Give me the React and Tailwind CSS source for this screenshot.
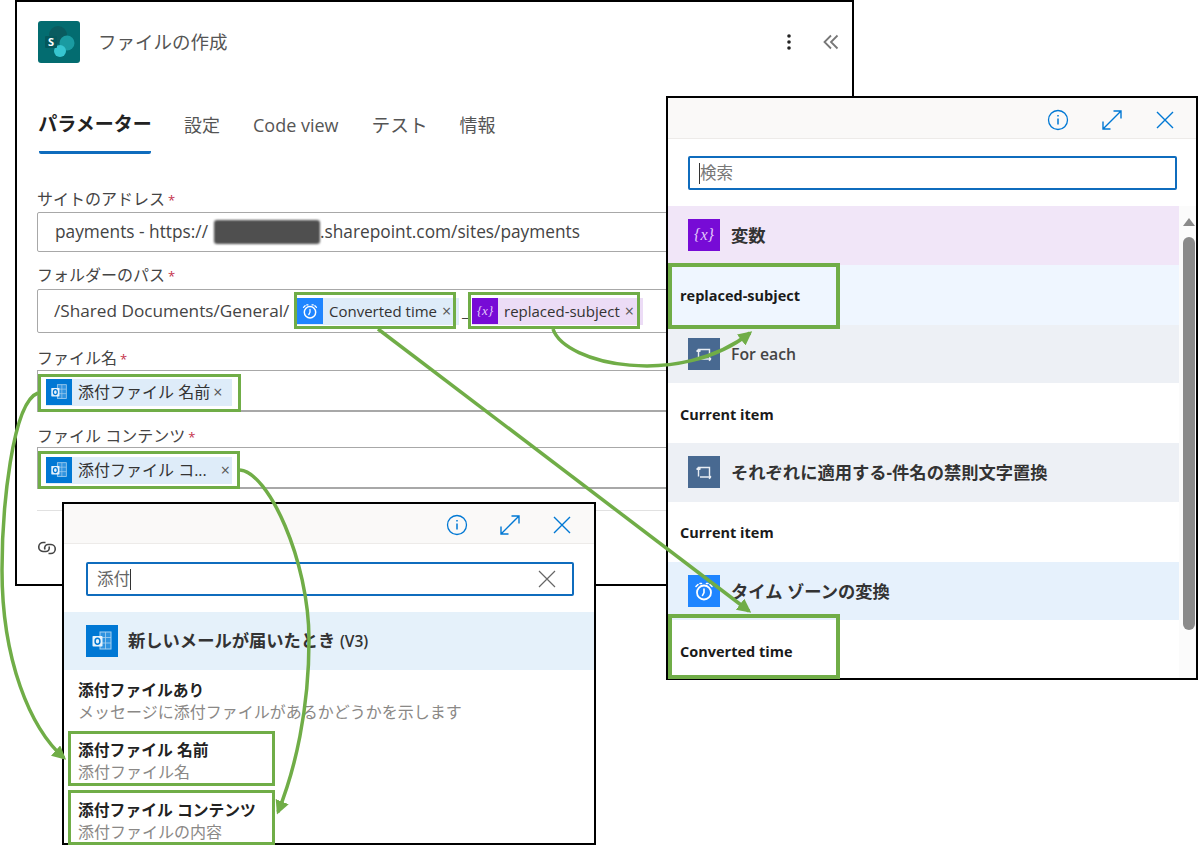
import React from "react";

const Label = ({ text, className }) => (
  <div className={`h-[22px] text-[16px] leading-[22px] text-[#444] ${className}`}>
    {text}
    <span className="ml-[3px] text-[13px] text-[#c4314b]">*</span>
  </div>
);

const SharePointIcon = () => (
  <svg width="42" height="42" viewBox="0 0 42 42" className="rounded-[3px]">
    <rect width="42" height="42" fill="#036c70" />
    <circle cx="20" cy="14" r="9" fill="#0a5b5f" />
    <circle cx="29" cy="22" r="7.5" fill="#1a9ba1" />
    <circle cx="22" cy="30" r="6" fill="#37c6d0" />
    <rect x="7" y="15" width="12" height="12" rx="1" fill="#04585c" />
    <text x="13" y="25" textAnchor="middle" fontSize="11" fontWeight="700" fill="#fff" fontFamily="Open Sans, sans-serif">S</text>
  </svg>
);

const OutlookIcon = ({ size }) => (
  <svg width={size} height={size} viewBox="0 0 32 32" className="shrink-0">
    <rect width="32" height="32" fill="#0078d4" />
    <rect x="14" y="7" width="11" height="17" fill="#2f93e0" stroke="#a8d0ef" strokeWidth="1" />
    <path d="M14 12.500h11M14 18h11M19.500 7v17" stroke="#a8d0ef" strokeWidth="0.8" />
    <rect x="6.500" y="11" width="10" height="10.500" rx="0.8" fill="#e8f3fb" />
    <ellipse cx="11.500" cy="16.200" rx="2.400" ry="3" fill="none" stroke="#0078d4" strokeWidth="1.500" />
  </svg>
);

const ClockIcon = ({ size }) => (
  <svg width={size} height={size} viewBox="0 0 32 32" className="shrink-0">
    <rect width="32" height="32" fill="#1f85ff" />
    <circle cx="16" cy="17.500" r="7" fill="none" stroke="#fff" strokeWidth="1.800" />
    <path d="M16 14v3.500l-1.500 3M10 9.500l-2 2M22 9.500l2 2M12 8.500h1.500M18.500 8.500H20" fill="none" stroke="#fff" strokeWidth="1.600" strokeLinecap="round" />
  </svg>
);

const LoopIcon = () => (
  <svg width="32" height="32" viewBox="0 0 32 32" className="shrink-0">
    <rect width="32" height="32" fill="#486991" />
    <path d="M10.500 20.500V11.500H21.500V19M10.500 11.500l-2 2M10.500 11.500l2 2M12 21H23M23 21l-2-1.800M23 21l-2 1.800" fill="none" stroke="#e8edf3" strokeWidth="1.400" />
  </svg>
);

const VarIcon = ({ size, text }) => (
  <span
    className={`flex shrink-0 items-center justify-center bg-[#770bd6] font-['Liberation_Serif',serif] italic text-[#e3c9fb] ${text}`}
    style={{ width: size, height: size }}
  >
    {"{x}"}
  </span>
);

const Chip = ({ icon, text, className, textClass = "text-[15px]", closeClass = "ml-[5px]" }) => (
  <div className={`flex h-[27px] items-center text-[#333] ${className}`}>
    {icon}
    <span className={`ml-[6px] whitespace-nowrap ${textClass}`}>{text}</span>
    <span className={`text-[16px] text-[#555] ${closeClass}`}>×</span>
  </div>
);

const HeaderIcons = ({ gap }) => (
  <div className={`flex items-center pt-[3px] ${gap}`}>
    <svg width="22" height="22" viewBox="0 0 22 22" fill="none" stroke="#0078d4" strokeWidth="1.300">
      <circle cx="11" cy="11" r="9.500" />
      <path d="M11 9.500v6M11 6v1.500" strokeWidth="1.500" />
    </svg>
    <svg width="22" height="22" viewBox="0 0 22 22" fill="none" stroke="#0078d4" strokeWidth="1.400">
      <path d="M2 20 20 2M12.500 2H20v7.500M2 12.500V20h7.500" />
    </svg>
    <svg width="20" height="20" viewBox="0 0 20 20" fill="none" stroke="#0078d4" strokeWidth="1.400">
      <path d="M2 2l16 16M18 2 2 18" />
    </svg>
  </div>
);

const SectionRow = ({ bg, icon, text, textClass = "text-[17.3px] font-bold text-[#333]" }) => (
  <div className={`flex h-[58.5px] items-center gap-[11px] pl-[20px] ${bg}`}>
    {icon}
    <span className={`pt-[2px] ${textClass}`}>{text}</span>
  </div>
);

const TokenRow = ({ bg = "bg-white", text }) => (
  <div className={`flex h-[60px] items-center pl-[12px] pt-[3px] text-[14.5px] font-bold text-[#1a1a1a] ${bg}`}>{text}</div>
);

const Result = ({ title, sub }) => (
  <div className="h-[60px] pl-[14px] pt-[9px] leading-[22px]">
    <div className="text-[15.8px] font-bold text-[#222]">{title}</div>
    <div className="text-[16px] text-[#8a8886]">{sub}</div>
  </div>
);

const MainCard = () => (
  <div className="absolute left-[15px] top-0 h-[586px] w-[839px] border-2 border-black bg-white pl-[20px] pr-[20px]">
    <div className="mr-[-7px] flex items-center pl-px pt-[19px]">
      <SharePointIcon />
      <span className="ml-[18px] text-[18.5px] text-[#555]">ファイルの作成</span>
      <svg width="6" height="18" viewBox="0 0 6 18" className="ml-auto" fill="#222">
        <circle cx="3" cy="3" r="1.800" />
        <circle cx="3" cy="9" r="1.800" />
        <circle cx="3" cy="15" r="1.800" />
      </svg>
      <svg width="16" height="16" viewBox="0 0 16 16" className="ml-[31px]" fill="none" stroke="#777" strokeWidth="1.800">
        <path d="M8 1.500 1.500 8 8 14.500M14.500 1.500 8 8l6.500 6.500" />
      </svg>
    </div>

    <div className="mt-[37px] flex h-[54px] gap-[33px] pl-[2px] text-[18px] text-[#555]">
      <div className="flex w-[112px] items-center justify-center whitespace-nowrap rounded-b-[2px] border-b-[3px] border-[#0f6cbd] pb-[3px] text-[19px] font-bold text-[#222]">パラメーター</div>
      <div className="flex items-center pb-[4px]">設定</div>
      <div className="flex items-center pb-[4px]">Code view</div>
      <div className="flex w-[55px] items-center whitespace-nowrap pb-[4px] text-[18.7px]">テスト</div>
      <div className="flex items-center pb-[4px]">情報</div>
    </div>

    <Label text="サイトのアドレス" className="mt-[34px]" />
    <div className="mt-[2px] flex h-[40px] items-center rounded-[2px] border border-[#a8a8a8] pl-[17px] text-[17.3px] text-[#444]">
      <span className="w-[159px] whitespace-nowrap">payments - https://</span>
      <span className="h-[24px] w-[106px] rounded-[3px] bg-[#4f4f4f] blur-[1px]" />
      .sharepoint.com/sites/payments
    </div>

    <Label text="フォルダーのパス" className="mt-[12px]" />
    <div className="mt-[3px] flex h-[44px] items-center rounded-[2px] border border-[#a8a8a8] pl-[16px] text-[17.2px] text-[#444]">
      <span className="w-[243px] whitespace-nowrap">/Shared Documents/General/</span>
      <Chip icon={<ClockIcon size={26} />} text="Converted time" className="w-[162px] bg-[#deecf9]" />
      <span className="ml-[3px] w-[10px]">_</span>
      <Chip icon={<VarIcon size={26} text="text-[13px]" />} text="replaced-subject" className="w-[171px] bg-[#ecdcf6]" />
    </div>

    <Label text="ファイル名" className="mt-[14px]" />
    <div className="mt-px flex h-[42px] items-center border border-b-2 border-[#a8a8a8] pl-[8px]">
      <Chip icon={<OutlookIcon size={26} />} text="添付ファイル 名前" textClass="text-[16px]" className="mt-[3px] w-[186px] bg-[#deecf9]" closeClass="ml-[3px]" />
    </div>

    <Label text="ファイル コンテンツ" className="mt-[13px]" />
    <div className="flex h-[42px] items-center border border-b-2 border-[#a8a8a8] pl-[8px]">
      <Chip icon={<OutlookIcon size={26} />} text="添付ファイル コ..." textClass="text-[16px]" className="mt-[5px] w-[186px] bg-[#deecf9]" closeClass="ml-[14px]" />
    </div>

    <div className="mt-[21px] border-t border-[#e1e1e1]" />
    <svg width="20" height="20" viewBox="0 0 20 20" className="mt-[27px]" fill="none" stroke="#444" strokeWidth="1.600">
      <path d="M8.500 4.500h-2a4.500 4.500 0 0 0-.5 9h3a3.500 3.500 0 0 0 3-5" />
      <path d="M11.500 15.500h2a4.500 4.500 0 0 0 .5-9h-3a3.500 3.500 0 0 0-3 5" />
    </svg>
  </div>
);

const TokenPanel = () => (
  <div className="absolute left-[666px] top-[96px] h-[584px] w-[532px] overflow-hidden border-2 border-black bg-white">
    <div className="flex h-[41px] items-center justify-end border-b border-[#edebe9] bg-[#faf9f8] pr-[21px]">
      <HeaderIcons gap="gap-[32px]" />
    </div>
    <div className="pl-[20px] pr-[19px] pt-[17px]">
      <div className="flex h-[34px] items-center rounded-[2px] border-2 border-[#0f6cbd] pl-[9px] text-[16.5px] text-[#777]">
        <span className="h-[21px] w-px bg-[#333]" />
        <span className="pt-px">検索</span>
      </div>
    </div>
    <div className="mt-[16px] flex">
      <div className="w-[511px]">
        <SectionRow bg="bg-[#f1e6f8]" icon={<VarIcon size={32} text="text-[16px]" />} text="変数" />
        <TokenRow bg="bg-[#eff6ff]" text="replaced-subject" />
        <SectionRow bg="bg-[#edf0f5]" icon={<LoopIcon />} text="For each" textClass="text-[15.8px] font-semibold text-[#444]" />
        <TokenRow text="Current item" />
        <SectionRow bg="bg-[#edf0f5]" icon={<LoopIcon />} text="それぞれに適用する-件名の禁則文字置換" />
        <TokenRow text="Current item" />
        <SectionRow bg="bg-[#e6f1fc]" icon={<ClockIcon size={32} />} text="タイム ゾーンの変換" />
        <TokenRow text="Converted time" />
      </div>
      <div className="flex h-[472px] w-[17px] flex-col items-center bg-[#fbfbfb] pl-[2px] pt-[12px]">
        <span className="h-0 w-0 border-x-[6px] border-b-[8px] border-x-transparent border-b-[#8a8a8a]" />
        <span className="mt-[11px] h-[393px] w-[12px] rounded-[6px] bg-[#8a8a8a]" />
      </div>
    </div>
  </div>
);

const SearchPanel = () => (
  <div className="absolute left-[62px] top-[502px] h-[343px] w-[534px] border-2 border-black bg-white">
    <div className="flex h-[40px] items-center justify-end border-b border-[#edebe9] bg-[#faf9f8] pr-[22px]">
      <HeaderIcons gap="gap-[31px]" />
    </div>
    <div className="pl-[22px] pr-[20px] pt-[18px]">
      <div className="flex h-[34px] items-center rounded-[2px] border-2 border-[#0f6cbd] pl-[9px] pr-[16px] text-[16.5px] text-[#666]">
        添付
        <span className="h-[21px] w-px bg-[#333]" />
        <svg width="18" height="18" viewBox="0 0 18 18" className="ml-auto" fill="none" stroke="#666" strokeWidth="1.200">
          <path d="M1 1l16 16M17 1 1 17" />
        </svg>
      </div>
    </div>
    <div className="mt-[16px] flex h-[58px] items-center gap-[10px] bg-[#e5f1fa] pl-[22px] text-[17.3px] font-bold text-[#333]">
      <OutlookIcon size={32} />
      <span>
        新しいメールが届いたとき <span className="text-[15.5px] font-semibold">(V3)</span>
      </span>
    </div>
    <Result title="添付ファイルあり" sub="メッセージに添付ファイルがあるかどうかを示します" />
    <Result title="添付ファイル 名前" sub="添付ファイル名" />
    <Result title="添付ファイル コンテンツ" sub="添付ファイルの内容" />
  </div>
);

export default function App() {
  return (
    <div className="relative h-[845px] w-[1198px] overflow-hidden bg-white font-['Open_Sans','Noto_Sans_CJK_JP',sans-serif]">
      <MainCard />
      <SearchPanel />
      <TokenPanel />

      {/* green callouts on top of the panels */}
      <div className="absolute left-[294px] top-[292px] h-[37px] w-[162px] border-[3px] border-[#70ad47]" />
      <div className="absolute left-[468px] top-[292px] h-[37px] w-[172px] border-[3px] border-[#70ad47]" />
      <div className="absolute left-[38px] top-[374px] h-[38px] w-[203px] border-[3px] border-[#70ad47]" />
      <div className="absolute left-[38px] top-[451px] h-[38px] w-[202px] border-[3px] border-[#70ad47]" />
      <div className="absolute left-[668px] top-[263px] h-[66px] w-[172px] border-4 border-[#70ad47]" />
      <div className="absolute left-[668px] top-[614px] h-[65px] w-[172px] border-4 border-[#70ad47]" />
      <div className="absolute left-[68px] top-[731px] h-[55px] w-[207px] border-[3px] border-[#70ad47]" />
      <div className="absolute left-[68px] top-[790px] h-[55px] w-[207px] border-[3px] border-[#70ad47]" />

      <svg width="1198" height="845" className="pointer-events-none absolute left-0 top-0" fill="none" stroke="#70ad47" strokeWidth="3.5">
        <defs>
          <marker id="head" markerWidth="4" markerHeight="4" refX="3.2" refY="2" orient="auto">
            <path d="M0 0 4 2 0 4z" fill="#70ad47" stroke="none" />
          </marker>
        </defs>
        <path d="M553 329C565 365 680 388 750 333" markerEnd="url(#head)" />
        <path d="M378 329 749 611" markerEnd="url(#head)" />
        <path d="M38 393C12 402 2 510 2 570C2 660 30 728 64 758" markerEnd="url(#head)" />
        <path d="M240 470C268 472 309 560 309 640C309 710 295 770 278 812" markerEnd="url(#head)" />
      </svg>
    </div>
  );
}
